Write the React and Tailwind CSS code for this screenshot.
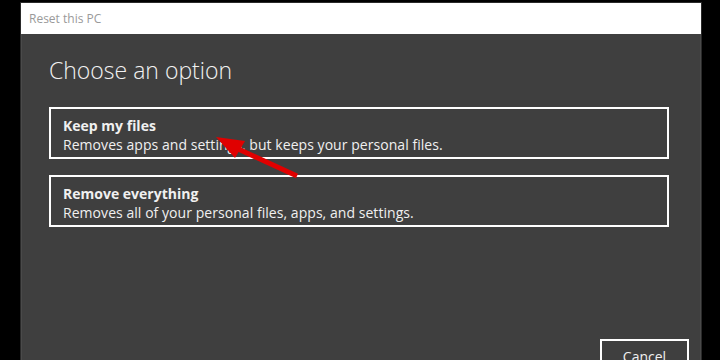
export default function App() {
  const font = { fontFamily: '"Open Sans", "Noto Sans", sans-serif' };
  return (
    <div className="w-[720px] h-[360px] bg-black overflow-hidden relative" style={font}>
      <div className="absolute left-[20px] top-[2px] w-[682px] h-[400px] border border-[#2a2a2a] flex flex-col">
        <div className="h-[31px] bg-white flex items-center pl-[8px] text-[12px] text-[#9a9a9a] shrink-0">
          Reset this PC
        </div>
        <div className="flex-1 bg-[#3f3f3f] border-l border-r border-[#4a4a4a] pl-[27px] pr-[31px] pt-[21px]">
          <h1 className="text-[23px] font-light text-[#f2f2f2] leading-[30px]">Choose an option</h1>
          <div className="mt-[22px] flex flex-col gap-[16px]">
            <div className="h-[52px] border-2 border-white px-[12px] pt-[7px] text-[#f0f0f0]">
              <div className="text-[14px] font-bold leading-[19px]">Keep my files</div>
              <div className="text-[14px] leading-[20px] tracking-[0.05px]">Removes apps and settings, but keeps your personal files.</div>
            </div>
            <div className="h-[52px] border-2 border-white px-[12px] pt-[7px] text-[#f0f0f0]">
              <div className="text-[14px] font-bold leading-[19px]">Remove everything</div>
              <div className="text-[14px] leading-[20px] tracking-[0.05px]">Removes all of your personal files, apps, and settings.</div>
            </div>
          </div>
          <div className="flex justify-end mt-[112px]">
            <div className="w-[89px] h-[34px] border-2 border-white text-[14px] text-[#f0f0f0] flex items-center justify-center mr-[-20px]">
              Cancel
            </div>
          </div>
        </div>
      </div>
      <svg className="absolute left-0 top-0" width="720" height="360" viewBox="0 0 720 360">
        <line x1="297" y1="176" x2="236" y2="148" stroke="#e00000" strokeWidth="5" />
        <polygon points="216,137 245,141 235,158" fill="#e00000" />
      </svg>
    </div>
  );
}
